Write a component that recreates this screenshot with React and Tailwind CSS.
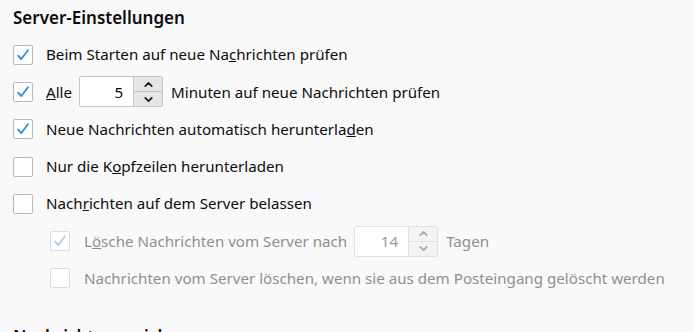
import React from 'react';

const Check = ({ checked, disabled }) => (
  <div
    className={`w-5 h-5 shrink-0 rounded-[2px] border bg-white flex items-center justify-center ${
      disabled ? 'border-[#dcdcdd]' : 'border-[#b9b9bb]'
    }`}
  >
    {checked && (
      <svg viewBox="0 0 16 16" className="w-4 h-4" fill="none">
        <path
          d="M3 8.6 L6.3 12 L13 3.2"
          stroke={disabled ? '#a9cdee' : '#2f8de0'}
          strokeWidth="1.8"
          strokeLinecap="round"
          strokeLinejoin="round"
        />
      </svg>
    )}
  </div>
);

const Spinner = ({ value, disabled }) => (
  <div
    className={`flex h-[31px] w-[84px] rounded-[2px] border bg-white ${
      disabled ? 'border-[#e0e0e1]' : 'border-[#c6c6c8]'
    }`}
  >
    <div className={`flex-1 flex items-center justify-end pr-[10px] ${disabled ? 'text-[#9a9a9c]' : ''}`}>
      {value}
    </div>
    <div className={`w-[29px] flex flex-col border-l ${disabled ? 'border-[#e0e0e1] bg-[#f3f3f4]' : 'border-[#c6c6c8] bg-[#e6e6e7]'}`}>
      {['M4 10 L8 6 L12 10', 'M4 6 L8 10 L12 6'].map((d, i) => (
        <div
          key={i}
          className={`flex-1 flex items-center justify-center ${
            i === 0 ? (disabled ? 'border-b border-[#e0e0e1]' : 'border-b border-[#c6c6c8]') : ''
          }`}
        >
          <svg viewBox="0 0 16 16" className="w-[13px] h-[13px]" fill="none">
            <path
              d={d}
              stroke={disabled ? '#a8a8aa' : '#1b1b1d'}
              strokeWidth="2.2"
              strokeLinecap="round"
              strokeLinejoin="round"
            />
          </svg>
        </div>
      ))}
    </div>
  </div>
);

const Row = ({ children, indent }) => (
  <div className={`h-[37.3px] flex items-center ${indent ? 'pl-[37px]' : ''}`}>{children}</div>
);

export default function App() {
  return (
    <div
      className="w-[694px] h-[332px] overflow-hidden bg-[#f9f9fa] text-[#0c0c0d] px-[13px] text-[15.15px]"
      style={{ fontFamily: '"Noto Sans", "Open Sans", sans-serif' }}
    >
      <div className="h-[36px] flex items-center text-[17px] font-semibold">Server-Einstellungen</div>

      <Row>
        <Check checked />
        <span className="ml-[13px]">
          Beim Starten auf neue Na<u>c</u>hrichten prüfen
        </span>
      </Row>
      <Row>
        <Check checked />
        <span className="ml-[13px] mr-[7px]">
          <u>A</u>lle
        </span>
        <Spinner value="5" />
        <span className="ml-[8px]">Minuten auf neue Nachrichten prüfen</span>
      </Row>
      <Row>
        <Check checked />
        <span className="ml-[13px]">
          Neue Nachrichten automatisch herunterla<u>d</u>en
        </span>
      </Row>
      <Row>
        <Check />
        <span className="ml-[13px]">
          Nur die K<u>o</u>pfzeilen herunterladen
        </span>
      </Row>
      <Row>
        <Check />
        <span className="ml-[13px]">
          Nach<u>r</u>ichten auf dem Server belassen
        </span>
      </Row>
      <Row indent>
        <Check checked disabled />
        <span className="ml-[14px] mr-[7px] text-[#8f8f91]">
          L<u>ö</u>sche Nachrichten vom Server nach
        </span>
        <Spinner value="14" disabled />
        <span className="ml-[8px] text-[#8f8f91]">Tagen</span>
      </Row>
      <Row indent>
        <Check disabled />
        <span className="ml-[14px] text-[#8f8f91]">
          Nachrichten vom Server löschen, wenn sie aus dem Postein<u>g</u>ang gelöscht werden
        </span>
      </Row>

      <div className="mt-[28px] h-[24px] flex items-center text-[17px] font-semibold">Nachrichtenspeicher</div>
    </div>
  );
}
